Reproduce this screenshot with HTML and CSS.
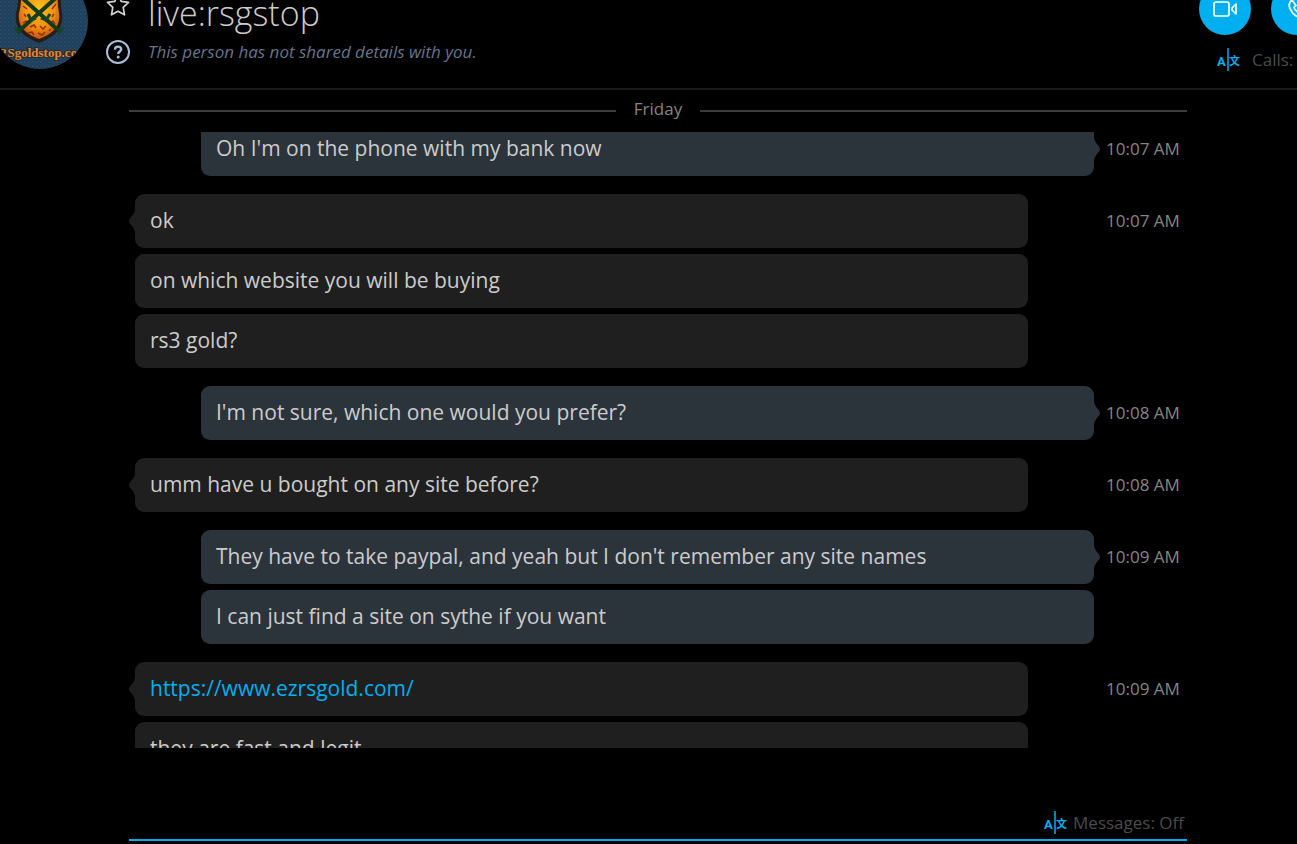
FILE: index.html
```html
<!DOCTYPE html>
<html lang="en">
<head>
<meta charset="utf-8">
<title>live:rsgstop</title>
<link rel="stylesheet" href="styles.css">
</head>
<body>
<header class="header">
  <svg class="avatar" viewBox="0 0 96 96" role="img" aria-label="Profile picture">
    <defs>
      <clipPath id="round"><circle cx="48" cy="48" r="48"/></clipPath>
      <pattern id="dots" width="4" height="4" patternUnits="userSpaceOnUse">
        <rect width="4" height="4" fill="#1f405c"/><circle cx="1" cy="1" r=".7" fill="#315877"/><circle cx="3" cy="3" r=".6" fill="#2b516f"/>
      </pattern>
      <radialGradient id="gold" cx=".5" cy=".4" r=".65"><stop offset="0" stop-color="#ffc21e"/><stop offset=".6" stop-color="#f08e12"/><stop offset="1" stop-color="#b8480a"/></radialGradient>
    </defs>
    <g clip-path="url(#round)">
      <rect width="96" height="96" fill="url(#dots)"/>
      <path d="M26 14L69 14Q68 30 70 40C72 56 62 64 47 70C32 64 22 56 24 40Q27 30 26 14Z" fill="#281c16"/>
      <path d="M29 14L66 14Q65 30 67 40C69 54 60 61 47 66C34 61 25 54 27 40Q30 30 29 14Z" fill="url(#gold)"/>
      <path d="M31 50l3-2 2 4M38 54l4-2 2 3M48 53l3 3 3-3M57 51l4-3 2 3M36 60l4-1 2 3M46 60l4 2 3-3M57 58l2-2M32 41l2 3M62 41l-2 3M31 33l4 3M64 31l-4 5" fill="none" stroke="#8f2f09" stroke-width="1.5"/>
      <path d="M27 58L66 23M67 58L28 23" stroke="#123b1e" stroke-width="4"/>
      <path d="M36 41l3 6 5-2M58 41l-4 6-5-2M23 55l5 6M66 61l5-6" fill="none" stroke="#174428" stroke-width="3"/>
      <text class="avatar-name" x="51" y="84" text-anchor="middle">RSgoldstop.com</text>
    </g>
  </svg>
  <div class="identity">
    <button class="plain" aria-label="Add to favourites"><svg width="24" height="24" viewBox="0 0 24 24"><path d="M12 1.500L15.200 8.300 22.500 9.300 17.200 14.400 18.500 21.800 12 18.200 5.500 21.800 6.800 14.400 1.500 9.300 8.800 8.300Z" fill="none" stroke="#d3d3d3" stroke-width="1.700" stroke-linejoin="round"/></svg></button>
    <h1 class="name">live:rsgstop</h1>
    <svg width="24" height="24" viewBox="0 0 24 24" aria-hidden="true"><circle cx="12" cy="12" r="11" fill="none" stroke="#a9bed8" stroke-width="2"/><path d="M9 9.500C9 5.700 15.200 5.700 15.200 9.300C15.200 11.500 12.200 11.500 12.200 14" fill="none" stroke="#a9bed8" stroke-width="2.400"/><circle cx="12.200" cy="17" r="1.500" fill="#a9bed8"/></svg>
    <p class="status">This person has not shared details with you.</p>
  </div>
  <div class="calls">
    <div class="call-buttons">
      <button class="round" aria-label="Video call"><svg width="26" height="18" viewBox="0 0 26 18"><rect x="2" y="2" width="15" height="14" rx="2" fill="none" stroke="#fff" stroke-width="1.700"/><path d="M24 4v10l-4-4v-2z" fill="none" stroke="#fff" stroke-width="1.700" stroke-linejoin="round"/></svg></button>
      <button class="round" aria-label="Call"><svg width="18" height="20" viewBox="0 0 18 20"><path d="M4 1C1 3 .5 6 2 9.500C4 14 7 17 11 18.500C14 19.500 16 18 17 15.500L12.500 12L10 13.500C8 12 6.500 10.500 6 8.500L8 6.500Z" fill="none" stroke="#fff" stroke-width="1.700" stroke-linejoin="round"/></svg></button>
    </div>
    <button class="translate calls-translate"><svg width="24" height="24" viewBox="0 0 24 24" aria-hidden="true"><text class="latin" x="0" y="18">A</text><path d="M11 0V23" stroke="#00aff0" stroke-width="1.500"/><text class="han" x="12" y="17">文</text></svg><span>Calls:</span></button>
  </div>
</header>
<main class="chat">
  <div class="day"><span>Friday</span></div>
  <div class="messages">
    <section class="group mine"><p class="bubble">Oh I'm on the phone with my bank now<svg class="tail" viewBox="0 0 6 26"><path d="M0 0C0 8 6 9 6 13S0 18 0 26Z"/></svg></p><time class="time">10:07 AM</time></section>
    <section class="group theirs"><p class="bubble">ok<svg class="tail" viewBox="0 0 6 26"><path d="M6 0C6 8 0 9 0 13S6 18 6 26Z"/></svg></p><time class="time">10:07 AM</time><p class="bubble">on which website you will be buying</p><p class="bubble">rs3 gold?</p></section>
    <section class="group mine"><p class="bubble">I'm not sure, which one would you prefer?<svg class="tail" viewBox="0 0 6 26"><path d="M0 0C0 8 6 9 6 13S0 18 0 26Z"/></svg></p><time class="time">10:08 AM</time></section>
    <section class="group theirs"><p class="bubble">umm have u bought on any site before?<svg class="tail" viewBox="0 0 6 26"><path d="M6 0C6 8 0 9 0 13S6 18 6 26Z"/></svg></p><time class="time">10:08 AM</time></section>
    <section class="group mine"><p class="bubble">They have to take paypal, and yeah but I don't remember any site names<svg class="tail" viewBox="0 0 6 26"><path d="M0 0C0 8 6 9 6 13S0 18 0 26Z"/></svg></p><time class="time">10:09 AM</time><p class="bubble">I can just find a site on sythe if you want</p></section>
    <section class="group theirs"><p class="bubble"><a href="https://www.ezrsgold.com/">https://www.ezrsgold.com/</a><svg class="tail" viewBox="0 0 6 26"><path d="M6 0C6 8 0 9 0 13S6 18 6 26Z"/></svg></p><time class="time">10:09 AM</time><p class="bubble">they are fast and legit</p></section>
  </div>
  <footer class="composer">
    <button class="translate"><svg width="24" height="24" viewBox="0 0 24 24" aria-hidden="true"><text class="latin" x="0" y="18">A</text><path d="M11 0V23" stroke="#00aff0" stroke-width="1.500"/><text class="han" x="12" y="17">文</text></svg><span>Messages: Off</span></button>
  </footer>
</main>
</body>
</html>
```
FILE: styles.css
```css
* { box-sizing: border-box; }
body {
  margin: 0;
  height: 100vh;
  display: flex;
  flex-direction: column;
  overflow: hidden;
  background: #000;
  color: #ccc;
  font-family: "Open Sans", "Noto Sans", sans-serif;
}
button {
  padding: 0;
  border: 0;
  background: none;
  font: inherit;
  cursor: pointer;
}
svg { display: block; }
h1, p { margin: 0; }

.header {
  flex: none;
  height: 90px;
  display: flex;
  align-items: flex-start;
  border-bottom: 2px solid #1b1b1b;
  overflow: hidden;
}
.avatar {
  flex: none;
  width: 96px;
  height: 96px;
  margin: -27px 0 0 -8px;
}
.avatar-name {
  font: bold 13px "Liberation Serif", serif;
  fill: #d98a3d;
  stroke: #33291f;
  stroke-width: 2px;
  paint-order: stroke;
}
.identity {
  flex: 1;
  display: grid;
  grid-template-columns: 24px 1fr;
  grid-template-rows: 46px 28px;
  column-gap: 18px;
  align-items: center;
  margin: -8px 0 0 18px;
}
.plain {
  height: 26px;
  align-self: start;
}
.name {
  align-self: start;
  font-size: 34px;
  line-height: 42px;
  font-weight: 300;
}
.status {
  font-size: 17px;
  line-height: 28px;
  font-style: italic;
  color: #66758a;
}
.calls {
  flex: none;
  margin: -17px -26px 0 0;
}
.call-buttons {
  display: flex;
  gap: 20px;
}
.round {
  width: 52px;
  height: 52px;
  display: grid;
  place-items: center;
  border-radius: 50%;
  background: #00aff0;
}
.translate {
  display: flex;
  align-items: center;
  gap: 5px;
  font-size: 17px;
  line-height: 24px;
  color: #4b4b4b;
}
.calls-translate {
  gap: 11px;
  margin: 13px 0 0 18px;
}
.latin { font: bold 13px Roboto, sans-serif; fill: #00aff0; }
.han { font: bold 11px "Noto Sans CJK SC", sans-serif; fill: #00aff0; }

.chat {
  flex: 1;
  min-height: 0;
  display: flex;
  flex-direction: column;
  padding: 0 110px 3px 129px;
}
.day {
  flex: none;
  height: 42px;
  display: flex;
  align-items: center;
  gap: 18px;
  color: #858585;
  font-size: 17px;
  line-height: 24px;
}
.day span { padding-bottom: 4px; }
.day::before, .day::after {
  content: "";
  flex: 1;
  height: 2px;
  background: #3c3c3c;
}
.messages {
  flex: 1;
  min-height: 0;
  overflow: hidden;
  display: flex;
  flex-direction: column;
  gap: 18px;
}
.messages > :first-child { margin-top: -10px; }
.group {
  flex: none;
  display: grid;
  gap: 6px 0;
}
.mine { grid-template-columns: 72px 1fr 12px 81px; }
.theirs { grid-template-columns: 6px 1fr 78px 81px; }
.bubble {
  grid-column: 2;
  position: relative;
  padding: 11px 15px 13px;
  border-radius: 9px;
  font-size: 21px;
  line-height: 30px;
}
.mine .bubble { background: #2b333b; }
.theirs .bubble { background: #1f1f1f; }
.bubble a { color: #00aff0; text-decoration: none; }
.tail {
  position: absolute;
  top: 14px;
  width: 6px;
  height: 26px;
}
.mine .tail { left: 100%; fill: #2b333b; }
.theirs .tail { right: 100%; fill: #1f1f1f; }
.time {
  grid-column: 4;
  align-self: center;
  font-size: 17px;
  line-height: 24px;
  color: #858585;
}
.composer {
  flex: none;
  height: 93px;
  display: flex;
  align-items: flex-end;
  justify-content: flex-end;
  padding: 0 3px 4px 0;
  border-bottom: 2px solid #00aff0;
}
```
